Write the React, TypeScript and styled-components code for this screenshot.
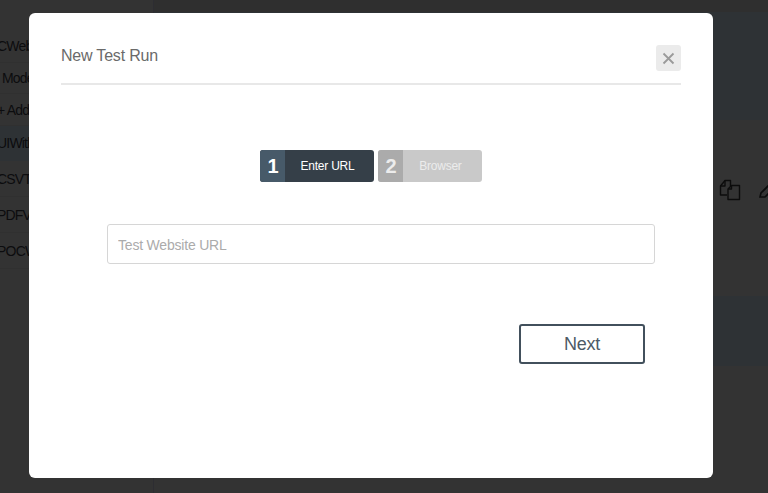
import React from "react";
import styled, { createGlobalStyle } from "styled-components";

const Global = createGlobalStyle`
  html, body { margin: 0; padding: 0; height: 100%; background: #333333; }
  body { font-family: "Liberation Sans", Arial, sans-serif; overflow: hidden; }
  * { box-sizing: border-box; }
`;

const Page = styled.div`
  display: flex;
  width: 768px;
  height: 493px;
  overflow: hidden;
  background: #333333;
`;

const Sidebar = styled.nav`
  flex: 0 0 154px;
  padding-top: 30px;
  border-right: 1px solid #2d2d32;
  overflow: hidden;
`;

const SideItem = styled.div<{ $active?: boolean; $height: number; $indent?: number }>`
  display: flex;
  align-items: center;
  height: ${(p) => p.$height}px;
  padding-left: ${(p) => p.$indent ?? 0}px;
  margin-left: -3px;
  font-size: 14px;
  letter-spacing: -0.8px;
  white-space: nowrap;
  color: #0c0c0e;
  background: ${(p) => (p.$active ? "#2e3235" : "transparent")};
  border-bottom: 1px solid ${(p) => (p.$active ? "#2e3235" : "#303030")};
`;

const Main = styled.main`
  flex: 1;
  display: flex;
  flex-direction: column;
`;

const TopBar = styled.div`
  height: 12px;
  background: #2f2f2f;
`;

const Band = styled.div<{ $height: number }>`
  height: ${(p) => p.$height}px;
  background: #2e3235;
`;

const ToolRow = styled.div`
  height: 176px;
  display: flex;
  align-items: flex-start;
  justify-content: flex-end;
  gap: 17px;
  padding: 59px 0 0 0;
  margin-right: -12px;
  color: #0c0c0c;
`;

const Overlay = styled.div`
  position: fixed;
  left: 29px;
  top: 13px;
  width: 684px;
  height: 465px;
  background: #fff;
  border-radius: 6px;
  padding: 32px 32px 0;
  display: flex;
  flex-direction: column;
`;

const Header = styled.header`
  display: flex;
  align-items: flex-start;
  justify-content: space-between;
  height: 40px;
  border-bottom: 2px solid #e8e8e8;
`;

const Title = styled.h2`
  margin: 0;
  padding-top: 1px;
  font-size: 16px;
  line-height: 20px;
  font-weight: 400;
  letter-spacing: -0.2px;
  color: #6a6a6a;
`;

const Close = styled.button`
  width: 25px;
  height: 26px;
  padding: 0;
  border: 0;
  border-radius: 3px;
  background: #ebebeb;
  color: #9a9a9a;
  display: flex;
  align-items: center;
  justify-content: center;
`;

const Stepper = styled.div`
  display: flex;
  justify-content: center;
  gap: 4px;
  margin-top: 65px;
  margin-left: -1px;
`;

const Step = styled.div<{ $on?: boolean }>`
  display: flex;
  height: 32px;
  width: ${(p) => (p.$on ? 114 : 104)}px;
  border-radius: 3px;
  overflow: hidden;
  background: ${(p) => (p.$on ? "#353f48" : "#c9c9c9")};
  color: ${(p) => (p.$on ? "#fff" : "#ececec")};
`;

const StepNum = styled.span<{ $on?: boolean }>`
  flex: 0 0 25px;
  display: flex;
  align-items: center;
  justify-content: center;
  padding-left: 2px;
  font-size: 20px;
  font-weight: 700;
  background: ${(p) => (p.$on ? "#475a69" : "#ababab")};
`;

const StepLabel = styled.span`
  flex: 1;
  display: flex;
  align-items: center;
  justify-content: center;
  padding-right: 3px;
  font-size: 12px;
  letter-spacing: -0.25px;
`;

const UrlInput = styled.input`
  display: block;
  align-self: flex-start;
  width: 548px;
  height: 40px;
  margin-top: 42px;
  margin-left: 46px;
  padding: 2px 10px 0;
  border: 1px solid #d6d6d6;
  border-radius: 3px;
  outline: none;
  font-family: inherit;
  font-size: 14px;
  letter-spacing: -0.2px;
  color: #555;
  &::placeholder { color: #ababab; opacity: 1; }
`;

const Actions = styled.div`
  display: flex;
  justify-content: flex-end;
  margin-top: 60px;
  padding-right: 36px;
`;

const NextButton = styled.button`
  width: 126px;
  height: 40px;
  background: #fff;
  border: 2px solid #42505c;
  border-radius: 3px;
  font-family: inherit;
  font-size: 18px;
  letter-spacing: -0.2px;
  color: #4d5a66;
`;

const CopyIcon = () => (
  <svg width="22" height="22" viewBox="0 0 22 22" fill="none" stroke="currentColor" strokeWidth="1.4" strokeLinejoin="round">
    <path d="M8 16H1.5V7L6 1.5h5.5V7" />
    <path d="M6 1.5V7H1.5" />
    <path d="M9 10l3.5-3.5h8V20.5H9z" />
    <path d="M12.5 6.5V10H9" />
  </svg>
);

const PenIcon = () => (
  <svg width="22" height="22" viewBox="0 0 22 22" fill="none" stroke="currentColor" strokeWidth="1.6">
    <path d="M2 18l1-4L12 5l4 4-9 9z" />
  </svg>
);

export default function App() {
  return (
    <Page>
      <Global />
      <Sidebar>
        <SideItem $height={33}>CWebTest</SideItem>
        <SideItem $height={31} $indent={5}>Model</SideItem>
        <SideItem $height={32}>+ Add Test</SideItem>
        <SideItem $active $height={35}>UIWithLogin</SideItem>
        <SideItem $height={36}>CSVTest</SideItem>
        <SideItem $height={36}>PDFValidation</SideItem>
        <SideItem $height={36}>POCWeb</SideItem>
      </Sidebar>
      <Main>
        <TopBar />
        <Band $height={108} />
        <ToolRow>
          <CopyIcon />
          <PenIcon />
        </ToolRow>
        <Band $height={70} />
      </Main>
      <Overlay role="dialog" aria-label="New Test Run">
        <Header>
          <Title>New Test Run</Title>
          <Close aria-label="Close">
            <svg width="13" height="13" viewBox="0 0 13 13" stroke="currentColor" strokeWidth="1.8">
              <path d="M1.5 1.5l10 10M11.5 1.5l-10 10" />
            </svg>
          </Close>
        </Header>
        <Stepper>
          <Step $on>
            <StepNum $on>1</StepNum>
            <StepLabel>Enter URL</StepLabel>
          </Step>
          <Step>
            <StepNum>2</StepNum>
            <StepLabel>Browser</StepLabel>
          </Step>
        </Stepper>
        <UrlInput placeholder="Test Website URL" />
        <Actions>
          <NextButton>Next</NextButton>
        </Actions>
      </Overlay>
    </Page>
  );
}
